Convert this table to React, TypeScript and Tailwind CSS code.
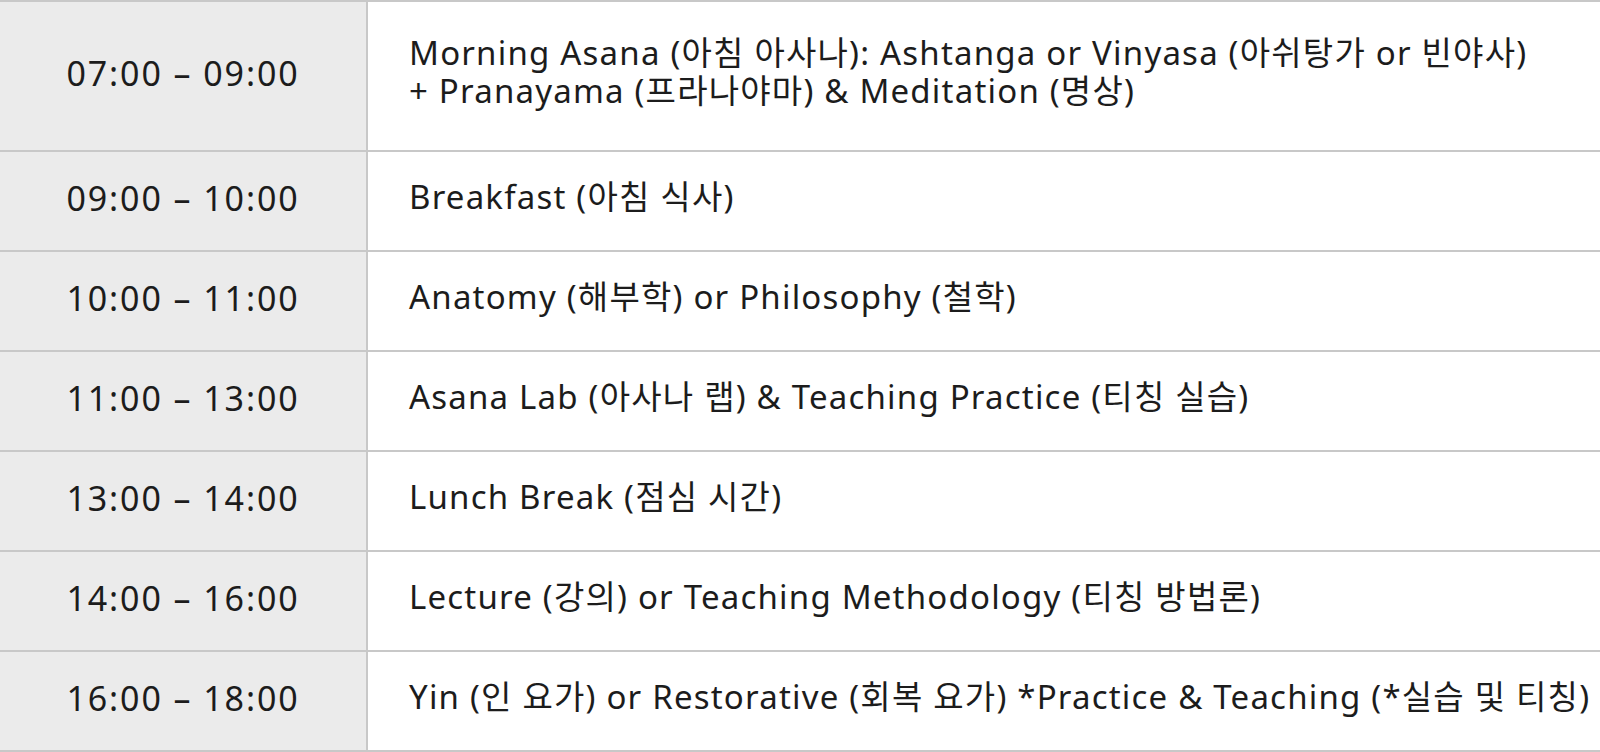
const rows = [
  {
    time: '07:00 – 09:00',
    lines: [
      'Morning Asana (아침 아사나): Ashtanga or Vinyasa (아쉬탕가 or 빈야사)',
      '+ Pranayama (프라나야마) & Meditation (명상)',
    ],
    tall: true,
  },
  { time: '09:00 – 10:00', lines: ['Breakfast (아침 식사)'] },
  { time: '10:00 – 11:00', lines: ['Anatomy (해부학) or Philosophy (철학)'] },
  { time: '11:00 – 13:00', lines: ['Asana Lab (아사나 랩) & Teaching Practice (티칭 실습)'] },
  { time: '13:00 – 14:00', lines: ['Lunch Break (점심 시간)'] },
  { time: '14:00 – 16:00', lines: ['Lecture (강의) or Teaching Methodology (티칭 방법론)'] },
  {
    time: '16:00 – 18:00',
    lines: ['Yin (인 요가) or Restorative (회복 요가) *Practice & Teaching (*실습 및 티칭)'],
  },
];

export default function App() {
  return (
    <div
      className="w-[1600px] h-[752px] bg-white text-[#1c1c1c] overflow-hidden"
      style={{ fontFamily: '"Noto Sans", "Noto Sans CJK KR", sans-serif' }}
    >
      <div className="border-t-2 border-[#c8c8c8]">
        {rows.map((r) => (
          <div
            key={r.time}
            className={`flex border-b-2 border-[#c8c8c8] ${r.tall ? 'h-[150px]' : 'h-[100px]'}`}
          >
            <div className="w-[368px] shrink-0 bg-[#ebebeb] border-r-2 border-[#c8c8c8] flex items-center justify-center pb-[5px] text-[34px] tracking-[1.9px]">
              {r.time}
            </div>
            <div className="flex-1 flex flex-col justify-center pl-[41px] pb-[8px] text-[33px] leading-[38px] tracking-[1.2px]">
              {r.lines.map((l) => (
                <div key={l} className="whitespace-nowrap">
                  {l}
                </div>
              ))}
            </div>
          </div>
        ))}
      </div>
    </div>
  );
}
